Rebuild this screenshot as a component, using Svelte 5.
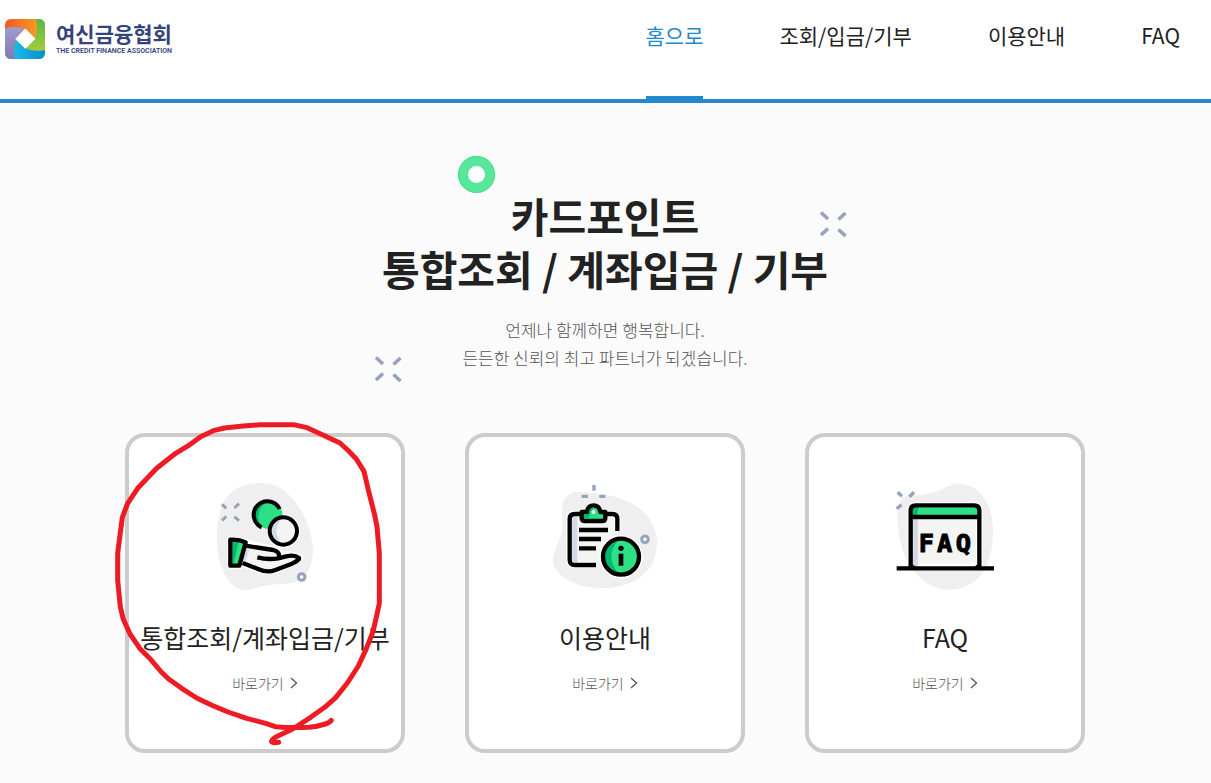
<script>
  const menu = [
    { label: '홈으로', active: true },
    { label: '조회/입금/기부', active: false },
    { label: '이용안내', active: false },
    { label: 'FAQ', active: false }
  ];
  const cards = [
    { title: '통합조회/계좌입금/기부', icon: 'hand', marked: true },
    { title: '이용안내', icon: 'guide', marked: false },
    { title: 'FAQ', icon: 'faq', marked: false }
  ];
</script>

{#snippet spark(cls)}
  <svg class="spark {cls}" viewBox="0 0 28 28" aria-hidden="true">
    <path d="M2 2.500l7 6.500M26.500 3l-7 6.500M2 25l7-6.500M26.500 26l-7-6.500" fill="none" stroke="#97a3ba" stroke-width="3.600" />
  </svg>
{/snippet}

<header>
  <a class="logo" href="#home">
    <svg viewBox="0 0 120 120" aria-hidden="true">
      <defs>
        <clipPath id="mark"><rect width="120" height="120" rx="17" /></clipPath>
        <linearGradient id="orange"><stop offset="0" stop-color="#f15a24" /><stop offset="1" stop-color="#f7a823" /></linearGradient>
        <linearGradient id="green" x2="0" y2="1"><stop offset="0" stop-color="#5cb647" /><stop offset="1" stop-color="#a5cb3b" /></linearGradient>
        <linearGradient id="cyan"><stop offset="0" stop-color="#1bb9e8" /><stop offset="1" stop-color="#0091d5" /></linearGradient>
        <linearGradient id="violet" x2="0" y2="1"><stop offset="0" stop-color="#a29bca" /><stop offset="1" stop-color="#7c7ab8" /></linearGradient>
      </defs>
      <g clip-path="url(#mark)">
        <rect width="120" height="120" fill="url(#orange)" />
        <path d="M92 0H120V95Q88 101 60 88L89 56Q102 28 92 0Z" fill="url(#green)" />
        <path d="M120 93V120H28Q22 84 34 60L62 88Q88 100 120 93Z" fill="url(#cyan)" />
        <path d="M0 28Q32 19 60 31L32 60Q20 84 30 120H0Z" fill="url(#violet)" />
        <path d="M61 30L90 59L61 88L32 60Z" fill="#fff" stroke="#fff" stroke-width="3" stroke-linejoin="round" />
      </g>
    </svg>
    <span class="name"><b>여신금융협회</b><small>THE CREDIT FINANCE ASSOCIATION</small></span>
  </a>
  <nav>
    {#each menu as item}
      <a href="#menu" class:active={item.active}>{item.label}</a>
    {/each}
  </nav>
</header>

<main>
  <section class="intro">
    <h1>카드포인트<br />통합조회 / 계좌입금 / 기부</h1>
    <p>언제나 함께하면 행복합니다.<br />든든한 신뢰의 최고 파트너가 되겠습니다.</p>
    <span class="ring"></span>
    {@render spark('right')}
    {@render spark('left')}
  </section>

  <section class="cards">
    {#each cards as card}
      <a class="card" href="#go">
        <svg class="icon" viewBox="0 0 390 390" aria-hidden="true">
          {#if card.icon === 'hand'}
            <path d="M180 39C236 37 279 76 309 132C332 175 345 235 336 270C325 319 298 341 252 342C200 342 174 353 148 359C111 365 91 343 75 315C48 265 44 185 61 123C77 66 118 40 180 39Z" fill="#efefef" />
            <path d="M66 103l13 12M117 101l-14 13M66 151l13-12M117 152l-14-12" stroke="#97a3ba" stroke-width="9" />
            <g fill="none" stroke="#fff" stroke-width="20"><circle cx="250" cy="183" r="41" /><path d="M91 208L137 218Q180 230 225 238Q239 244 238 256Q276 249 300 263Q274 284 219 302Q196 309 128 281L117 288H91Z" stroke-linejoin="round" /></g>
            <circle cx="207" cy="136" r="41" fill="#2ee084" />
            <path d="M187 174A41 41 0 0 1 201 96A52 52 0 0 0 187 174Z" fill="#00b871" />
            <path d="M185 172A41 41 0 1 1 239 117" fill="none" stroke="#000" stroke-width="12" />
            <circle cx="250" cy="183" r="41" fill="#f4f4f3" />
            <path d="M245 145A39 39 0 0 0 245 221Q214 183 245 145Z" fill="#d4dae5" />
            <circle cx="250" cy="183" r="41" fill="none" stroke="#000" stroke-width="12" />
            <path d="M137 226L224 239Q239 246 237 256Q276 249 299 263L276 283L219 302Q188 307 127 278Z" fill="#f4f4f3" />
            <path d="M135 235L149 240L137 274L126 270Z" fill="#d4dae5" />
            <path d="M91 209Q117 207 137 217L117 287H91Z" fill="#2ee084" />
            <path d="M98 214H116L100 286Z" fill="#00b871" />
            <path d="M91 209Q117 207 137 217L118 287H91ZM136 227L220 240Q239 245 237 260M172 262Q203 270 235 265C257 260 280 250 297 264Q300 269 276 281L224 301Q202 309 174 297L128 279" fill="none" stroke="#000" stroke-width="13" stroke-linejoin="round" />
            <circle cx="305" cy="321" r="10" fill="#fff" stroke="#97a3ba" stroke-width="9" />
          {:else if card.icon === 'guide'}
            <path d="M67 126C63 86 87 62 127 66C190 72 247 77 296 113C336 142 356 191 350 236C341 302 289 345 211 353C139 360 73 338 46 296C21 254 72 210 67 165Z" fill="#efefef" />
            <path d="M162 45v17M125 79h19M178 79h18" stroke="#97a3ba" stroke-width="10" />
            <path d="M168 284H105Q89 284 89 269V147Q89 132 105 132H217Q232 132 232 147V183" fill="#f4f4f3" stroke="#fff" stroke-width="20" />
            <path d="M96 146Q96 139 112 139V278Q96 278 96 269Z" fill="#d4dae5" />
            <path d="M168 285H105Q89 285 89 269V147Q89 132 105 132H217Q232 132 232 147V183" fill="none" stroke="#000" stroke-width="13" />
            <path d="M125 126H141Q143 106 161 106Q178 106 181 126H196V143Q196 153 186 153H136Q125 153 125 143Z" fill="#2ee084" stroke="#000" stroke-width="13" stroke-linejoin="round" />
            <path d="M147 125Q149 112 161 112L144 146H132V132H147Z" fill="#00b871" />
            <circle cx="160" cy="126" r="6" fill="#fff" />
            <path d="M117 180h87M117 207h66M117 235h51" stroke="#000" stroke-width="13" />
            <circle cx="243" cy="260" r="55" fill="#2ee084" stroke="#fff" stroke-width="20" />
            <circle cx="243" cy="260" r="54" fill="#2ee084" />
            <path d="M234 211A49 49 0 0 0 234 309Q194 260 234 211Z" fill="#00b871" />
            <circle cx="243" cy="260" r="54" fill="none" stroke="#000" stroke-width="13" />
            <circle cx="243" cy="235" r="8" />
            <path d="M243 251v36" stroke="#000" stroke-width="14" />
            <circle cx="315" cy="208" r="10" fill="#fff" stroke="#97a3ba" stroke-width="9" />
          {:else}
            <path d="M101 76C143 77 172 64 203 49C251 27 303 53 325 105C345 155 344 234 319 289C297 336 252 362 202 359C141 356 88 305 67 236C48 177 45 93 74 80Q84 75 101 76Z" fill="#efefef" />
            <path d="M53 67l13 12M102 67l-14 13M50 116l14-12" stroke="#97a3ba" stroke-width="10" />
            <path d="M92 291V121Q92 106 107 106H283Q298 106 298 121V291Z" fill="#f4f4f3" stroke="#fff" stroke-width="20" />
            <path d="M98 147H114V291H98Z" fill="#d4dae5" />
            <path d="M98 112H292V140H98Z" fill="#2ee084" />
            <path d="M98 112H118Q110 120 113 137H98Z" fill="#00b871" />
            <path d="M50 295H342M92 294V121Q92 106 107 106H283Q298 106 298 121V294M92 141H298" fill="none" stroke="#000" stroke-width="13" />
            <path d="M98 283v8h9ZM292 283v8h-9Z" />
            <text class="faq" x="116 171 227" y="247">FAQ</text>
          {/if}
        </svg>
        <h2>{card.title}</h2>
        <span class="go">바로가기
          <svg viewBox="0 0 8 12" aria-hidden="true"><path d="M1 1l5.500 5L1 11" fill="none" stroke="#555" stroke-width="1.300" /></svg>
        </span>
        {#if card.marked}
          <svg class="pen" viewBox="0 0 960 1080" aria-hidden="true">
            <path d="M694 931Q690 938 676 942Q651 950 626 952Q573 954 526 950L497 940L440 925L384 906L334 885L290 864L245 835L206 807L184 786L152 748L120 716L90 672L70 628L61 591L53 511L53 430L60 375L67 322L83 280L113 235L170 175L227 130L265 107L302 80L340 62L373 54L430 48L480 44H580L618 52L667 74L720 99L743 120L769 147L792 184L805 240L824 315L831 350L838 430V580L829 622L819 665L798 718L775 768L742 819L707 863L674 892L632 922L578 957L540 975Q514 986 515 994Q514 1000 536 997" fill="none" stroke="#ed1c24" stroke-width="15" stroke-linecap="round" stroke-linejoin="round" />
          </svg>
        {/if}
      </a>
    {/each}
  </section>
</main>

<style>
  :global(body) {
    margin: 0;
    background: #fbfbfb;
    color: #222;
    font-family: "Noto Sans CJK KR", "Noto Sans KR", sans-serif;
  }
  a { color: inherit; text-decoration: none; }
  svg { display: block; }
  header {
    display: flex;
    justify-content: space-between;
    align-items: stretch;
    background: #fff;
    border-bottom: 4px solid #2389cc;
    padding: 0 31px 0 5px;
  }
  .logo { display: flex; align-items: flex-start; gap: 11px; padding-top: 19px; }
  .logo svg { width: 40px; height: 40px; }
  .name { display: flex; flex-direction: column; color: #34437c; }
  .name b { font-size: 21px; line-height: 28px; }
  .name small { font: 600 7px/9px Roboto, sans-serif; }
  nav { display: flex; gap: 76px; }
  nav a {
    box-sizing: border-box;
    height: 99px;
    padding-top: 19px;
    border-bottom: 3px solid transparent;
    font-size: 21px;
    line-height: 32px;
    white-space: nowrap;
  }
  nav a.active { color: #2389cc; border-color: #2389cc; }
  main { padding: 86px 21px 30px 20px; }
  .intro { position: relative; width: fit-content; margin: 0 auto 61px; text-align: center; }
  h1 { margin: 0 0 21px; font-size: 41px; line-height: 53px; font-weight: 700; }
  p { margin: 0; font-size: 17px; line-height: 28px; font-weight: 300; color: #555; }
  .ring {
    position: absolute;
    left: 76px;
    top: -33px;
    box-sizing: border-box;
    width: 37px;
    height: 37px;
    border: 10px solid #58e69b;
    border-radius: 50%;
    background: #fff;
    outline: 1px solid #42df8a;
    outline-offset: -1px;
  }
  .spark { position: absolute; width: 28px; height: 28px; }
  .spark.right { right: -19px; top: 21px; }
  .spark.left { left: -8px; top: 166px; }
  .cards { display: flex; justify-content: center; gap: 60px; }
  .card {
    position: relative;
    box-sizing: border-box;
    flex: 0 1 280px;
    display: flex;
    flex-direction: column;
    align-items: center;
    padding: 33px 0 56px;
    border: 4px solid #ccc;
    border-radius: 20px;
    background: #fff;
  }
  .icon { width: 130px; height: 130px; }
  .faq { font: 700 76px "DejaVu Sans Mono", monospace; fill: #000; stroke: #000; stroke-width: 3px; }
  h2 { margin: 19px 0 18px; font-size: 25px; line-height: 36px; font-weight: 400; white-space: nowrap; }
  .go { display: flex; align-items: center; gap: 6px; font-size: 14px; line-height: 20px; font-weight: 300; color: #555; }
  .go svg { width: 8px; height: 12px; }
  .pen { position: absolute; left: -29px; top: -27px; width: 320px; height: 360px; pointer-events: none; }
</style>
